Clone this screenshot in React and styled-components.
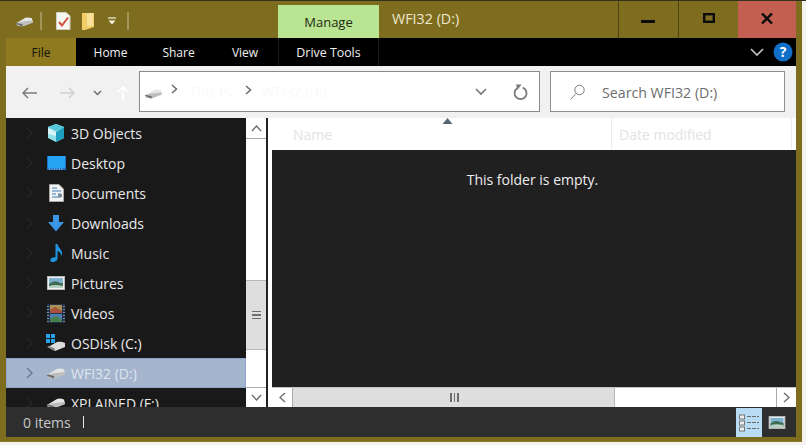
import React from "react";
import styled, { createGlobalStyle } from "styled-components";

const Global = createGlobalStyle`
  html, body { margin: 0; padding: 0; background: #e9e9e4; overflow: hidden; }
  * { box-sizing: border-box; }
`;

const FONT = `"Open Sans", "Noto Sans", "Liberation Sans", sans-serif`;

const Page = styled.div`
  width: 806px; height: 445px; display: flex; flex-direction: column;
  font-family: ${FONT}; background: #f4f4ef; border-top: 1px solid #33311f;
`;
const Win = styled.div`
  width: 802px; height: 441px; background: #7f6d1f; display: flex; flex-direction: column;
  border-bottom: 1px solid #8d7a24; padding-bottom: 4px;
`;
const TitleBar = styled.div`
  height: 37px; display: flex; align-items: stretch; flex: none; padding-left: 6px; padding-right: 6px;
`;
const Qat = styled.div`
  width: 272px; display: flex; align-items: center; padding-top: 3px; flex: none;
`;
const QatSep = styled.span`
  width: 2px; height: 18px; background: #a39559; flex: none;
  margin-left: ${p => p.$ml}px;
`;
const QatIcon = styled.svg`
  flex: none; margin-left: ${p => p.$ml || 0}px;
`;
const QatDrive = styled.span`
  display: flex; flex: none; margin-left: ${p => p.$ml}px;
`;
const ManageTab = styled.div`
  width: 101px; margin-top: 4px; background: #b9e492; color: #1d2b12; font-size: 13px;
  display: flex; align-items: center; justify-content: center; flex: none;
`;
const Title = styled.div`
  margin-left: 13px; color: #ece7cf; font-size: 14.3px; display: flex; align-items: center; padding-bottom: 2px;
  flex: 1;
`;
const WinBtn = styled.div`
  width: ${p => p.$w}px; display: flex; align-items: center; justify-content: center; flex: none;
  background: ${p => p.$close ? "#c25f50" : "transparent"};
  border-left: ${p => p.$close ? "none" : "1px solid #4e4313"};
  padding-bottom: 3px;
`;
const MinIcon = styled.svg`
  margin-top: 7px; margin-right: 1px;
`;
const Ribbon = styled.div`
  height: 28px; margin: 0 6px; background: #000; display: flex; align-items: stretch; flex: none;
`;
const Tab = styled.div`
  width: ${p => p.$w}px; flex: none; display: flex; align-items: center; justify-content: center;
  font-size: ${p => p.$ctx ? "12.4px" : "12px"}; color: ${p => p.$file ? "#15130a" : "#f0f0f0"};
  background: ${p => p.$file ? "#8f7a20" : "transparent"};
  border-left: ${p => p.$ctx ? "1px solid #1c1c1c" : "none"};
  border-right: ${p => p.$ctx ? "1px solid #1c1c1c" : "none"};
`;
const RibbonEnd = styled.div`
  margin-left: auto; display: flex; align-items: center; gap: 9px; padding-right: 3px;
`;
const Body = styled.div`
  flex: 1; min-height: 0; margin: 0 6px; display: flex; flex-direction: column;
`;
const Nav = styled.div`
  height: 52px; background: #f1f1f1; flex: none; display: flex; align-items: flex-start; padding-top: 5px;
`;
const NavButtons = styled.div`
  width: 133px; height: 41px; display: flex; align-items: center; flex: none; padding-top: 2px;
`;
const NavIcon = styled.svg`
  flex: none; margin-left: ${p => p.$ml}px; margin-top: ${p => p.$mt || 0}px;
`;
const AddressBox = styled.div`
  width: 401px; height: 41px; background: #fff; border: 1px solid #8a8a8a; display: flex; align-items: center; flex: none;
`;
const AddrDrive = styled.span`
  margin-left: 4px; margin-top: 3px; display: flex; flex: none;
`;
const Crumb = styled.span`
  color: #f9f9f9; font-size: 14px; margin-left: ${p => p.$ml}px; flex: none;
`;
const AddrEnd = styled.div`
  margin-left: auto; display: flex; align-items: center; gap: 26px; padding-right: 10px; padding-top: 1px;
`;
const SearchBox = styled.div`
  width: 235px; height: 41px; margin-left: 10px; background: #fff; border: 1px solid #8f8f8f;
  display: flex; align-items: center; flex: none; padding-left: 19px; padding-top: 1px;
`;
const SearchText = styled.span`
  color: #6d6d6d; font-size: 14.2px; margin-left: 17px;
`;
const Main = styled.div`
  flex: 1; min-height: 0; display: flex;
`;
const Tree = styled.div`
  width: 240px; background: #191919; overflow: hidden; flex: none;
`;
const Row = styled.div`
  height: 30px; display: flex; align-items: center;
  color: ${p => p.$sel ? "#dfe5ee" : "#e9e9e9"}; font-size: 14px;
  background: ${p => p.$sel ? "#a5b5cd" : "transparent"};
  box-shadow: ${p => p.$sel ? "inset 0 0 0 1px #8ba3c7" : "none"};
`;
const Chev = styled.svg`
  margin-left: 19px; flex: none; width: 10px; height: 12px;
`;
const RowIcon = styled.div`
  width: 24px; height: 20px; margin-left: 9px; margin-right: 3px; display: flex; align-items: center; justify-content: center; flex: none;
`;
const VScroll = styled.div`
  width: 22px; flex: none; display: flex; flex-direction: column; background: #fff; border-right: 2px solid #222;
`;
const SBtn = styled.div`
  flex: none; background: #fff; display: flex; align-items: center; justify-content: center;
  width: ${p => p.$w || "auto"}; height: ${p => p.$h || "auto"};
  border-bottom: ${p => p.$bb ? "1px solid #aaa" : "none"};
  border-top: ${p => p.$bt ? "1px solid #aaa" : "none"};
  border-left: ${p => p.$bl ? "1px solid #aaa" : "none"};
  border-right: ${p => p.$br ? "1px solid #aaa" : "none"};
`;
const VTrack = styled.div`
  flex: 1; display: flex; flex-direction: column; padding-top: 141px; padding-bottom: 37px;
`;
const VThumb = styled.div`
  flex: 1; background: #dedede; border-top: 1px solid #b8b8b8; border-bottom: 1px solid #b8b8b8;
  display: flex; align-items: center; justify-content: center;
`;
const Grip = styled.div`
  display: flex; flex-direction: ${p => p.$h ? "row" : "column"}; gap: 2px;
  margin-left: ${p => p.$h ? "2px" : "0"};
  span { display: block; background: #6d6d6d; width: ${p => p.$h ? "1.5px" : "9px"}; height: ${p => p.$h ? "9px" : "1.5px"}; }
`;
const Pane = styled.div`
  flex: 1; min-width: 0; display: flex; flex-direction: column; padding-left: 4px; background: #fff;
`;
const Header = styled.div`
  height: 32px; flex: none; background: #fff; position: relative; display: flex; align-items: stretch;
  font-size: 14px; color: #e3e3e3;
`;
const Col = styled.div`
  width: ${p => p.$w}px; flex: none; padding-left: ${p => p.$pl}px; padding-top: 7px;
  border-right: 1px solid #ececec; height: 31px;
`;
const SortMark = styled.svg`
  position: absolute; left: 170px; top: 0;
`;
const Empty = styled.div`
  flex: 1; background: #202020; color: #eeeeee; font-size: 14px; text-align: center; padding-top: 20px; padding-right: 3px;
`;
const HScroll = styled.div`
  height: 20px; flex: none; display: flex; background: #fff; border-top: 1px solid #c4c4c4;
`;
const HThumb = styled.div`
  width: 322px; background: #dedede; border-right: 1px solid #b8b8b8; display: flex; align-items: center; justify-content: center; flex: none;
`;
const HSpacer = styled.div`flex: 1;`;
const Status = styled.div`
  height: 30px; flex: none; background: #2e2e2e; display: flex; align-items: center; color: #c9c9c9; font-size: 14px; padding-left: 17px;
`;
const Divider = styled.span`
  width: 1px; height: 12px; background: #e8e8e8; margin-left: 12px;
`;
const ViewGroup = styled.div`
  margin-left: auto; display: flex; align-items: stretch; height: 29px; margin-top: 1px;
`;
const ViewBtn = styled.div`
  width: 26px; display: flex; align-items: center; justify-content: center; flex: none;
  background: ${p => p.$on ? "#b8dcf4" : "transparent"};
`;
const ViewRest = styled.div`
  width: 34px; display: flex; align-items: center; padding-left: 6px; flex: none;
`;

const Drive = ({ w = 20, h = 14 }) => (
  <svg width={w} height={h} viewBox="0 0 20 14">
    <path d="M1 9 L11 3 Q14 2 18 3.5 L19 8 L8 12 Z" fill="#e6e6e6" />
    <path d="M1 9 L8 7 L19 6 L19 8 L8 12.5 L2 11.5 Z" fill="#bdbdbd" />
    <path d="M0.5 9.5 L8 12.5 L8 10 L2 8.5 Z" fill="#6b6b6b" />
  </svg>
);
const PictureIcon = ({ w = 18, h = 14 }) => (
  <svg width={w} height={h} viewBox="0 0 18 14">
    <rect x="0.5" y="0.5" width="17" height="13" fill="#f2f2f2" stroke="#b9b9b9" />
    <rect x="2" y="2" width="14" height="10" fill="#7fb2cf" />
    <path d="M2 8 Q7 4 11 6 T16 7 V12 H2 Z" fill="#3e6b52" />
    <path d="M2 10 Q8 8 16 10 V12 H2 Z" fill="#b8d0c2" />
  </svg>
);
const ChevR = ({ c = "#242424" }) => (
  <Chev viewBox="0 0 10 12"><path d="M2 1 L7 6 L2 11" fill="none" stroke={c} strokeWidth="1.6" /></Chev>
);

const icons = {
  obj: (
    <svg width="20" height="20" viewBox="0 0 20 20">
      <path d="M10 1 L18 4 V15 L10 19 L2 15 V4 Z" fill="#8fe0ea" />
      <path d="M10 9 L18 4 V15 L10 19 Z" fill="#1e9fbe" />
      <path d="M10 1 L18 4 L10 8 L2 4 Z" fill="#57c7d8" />
      <path d="M2 5 L10 9 V13 L2 11 Z" fill="#d8f5f6" />
    </svg>
  ),
  desk: (
    <svg width="19" height="16" viewBox="0 0 19 16">
      <rect x="0" y="1" width="19" height="14" fill="#1d6fc2" />
      <rect x="1" y="1" width="17" height="12" fill="#25a4f5" />
      <path d="M2 14 H17" stroke="#cfe8fb" strokeWidth="1" strokeDasharray="1 1.5" />
    </svg>
  ),
  doc: (
    <svg width="15" height="18" viewBox="0 0 15 18">
      <path d="M0.5 0.5 H10 L14.5 5 V17.5 H0.5 Z" fill="#f3f3f3" stroke="#a8a8a8" />
      <path d="M3 4 H8 M3 7 H12 M3 10 H7 M9 10 H12 M3 13 H12" stroke="#3b7fbf" strokeWidth="1.2" />
      <path d="M9 10 H13 V13 H9 Z" fill="#7a8a99" />
    </svg>
  ),
  dl: (
    <svg width="16" height="17" viewBox="0 0 16 17">
      <path d="M5 0 H11 V7 H16 L8 16.5 L0 7 H5 Z" fill="#3a95e4" />
    </svg>
  ),
  music: (
    <svg width="13" height="18" viewBox="0 0 13 18">
      <path d="M5.5 0 H7.5 C8 4 12 5 12 9 C12 10.5 11.5 11.5 11 12 C11 9 9.5 7.5 7.5 7 V14.5 C7.5 16.5 5 18 2.5 18 C0.5 18 0 16.5 0.5 15.5 C1 14 3.5 13 5.5 13.5 Z" fill="#1f97e0" />
    </svg>
  ),
  pic: <PictureIcon />,
  vid: (
    <svg width="18" height="19" viewBox="0 0 18 19">
      <rect width="18" height="19" fill="#24324e" />
      <rect x="3" y="1" width="12" height="8" fill="#a88f52" />
      <rect x="3" y="10" width="12" height="8" fill="#4f7fae" />
      <path d="M3 6 L8 3 L15 7 V9 H3 Z" fill="#a9503f" />
      <path d="M3 15 L9 12 L15 16 V18 H3 Z" fill="#47804a" />
      <path d="M1 2 V18 M17 2 V18" stroke="#d8d8d8" strokeWidth="1" strokeDasharray="1 2" />
    </svg>
  ),
  os: (
    <svg width="20" height="18" viewBox="0 0 20 18">
      <rect x="0" y="0" width="4" height="4" fill="#27a3e8" />
      <rect x="5" y="0" width="4" height="4" fill="#27a3e8" />
      <rect x="0" y="5" width="4" height="4" fill="#27a3e8" />
      <rect x="5" y="5" width="4" height="4" fill="#27a3e8" />
      <path d="M2 13 L11 8 Q15 7 19 9 L19 13 L9 17 Z" fill="#dcdcdc" />
      <path d="M1 13 L9 17 L9 14.5 L3 12 Z" fill="#8a8a8a" />
    </svg>
  ),
  drive: <Drive />,
};

const rows = [
  ["3D Objects", "obj"], ["Desktop", "desk"], ["Documents", "doc"], ["Downloads", "dl"],
  ["Music", "music"], ["Pictures", "pic"], ["Videos", "vid"], ["OSDisk (C:)", "os"],
  ["WFI32 (D:)", "drive", true], ["XPLAINED (F:)", "drive"],
];

const Caret = ({ d, c = "#6e6e6e", w = 12, h = 8, sw = 1.4 }) => (
  <svg width={w} height={h} viewBox={`0 0 ${w} ${h}`}><path d={d} fill="none" stroke={c} strokeWidth={sw} /></svg>
);

export default function App() {
  return (
    <>
      <Global />
      <Page>
        <Win>
          <TitleBar>
            <Qat>
              <QatDrive $ml={9}><Drive w={19} h={13} /></QatDrive>
              <QatSep $ml={6} />
              <QatIcon $ml={14} width="15" height="18" viewBox="0 0 15 18">
                <path d="M0.5 0.5 H10 L14 4 V17.5 H0.5 Z" fill="#f6f6f2" stroke="#cfcfc4" />
                <path d="M3 10 L6 13.5 L12 5.5" fill="none" stroke="#d2503c" strokeWidth="2" />
              </QatIcon>
              <QatIcon $ml={11} width="13" height="18" viewBox="0 0 13 18">
                <path d="M0 1 H12 V15 L3 18 H0 Z" fill="#f3cd68" />
                <path d="M5 1 H11 V14 L5 14 Z" fill="#fae19a" />
              </QatIcon>
              <QatIcon $ml={12} width="10" height="9" viewBox="0 0 10 9">
                <path d="M1 1 H9" stroke="#f4f1e2" strokeWidth="1.2" />
                <path d="M1.5 3.5 H8.5 L5 7.5 Z" fill="#f4f1e2" />
              </QatIcon>
              <QatSep $ml={10} />
            </Qat>
            <ManageTab>Manage</ManageTab>
            <Title>WFI32 (D:)</Title>
            <WinBtn $w={60}>
              <MinIcon width="14" height="4" viewBox="0 0 14 4"><rect width="14" height="3" fill="#0c0c0c" /></MinIcon>
            </WinBtn>
            <WinBtn $w={60}>
              <svg width="12" height="10" viewBox="0 0 12 10"><rect x="1.2" y="1.2" width="9.6" height="7.6" fill="none" stroke="#0c0c0c" strokeWidth="2.4" /></svg>
            </WinBtn>
            <WinBtn $w={58} $close>
              <svg width="12" height="11" viewBox="0 0 12 11"><path d="M1 0.5 L11 10.5 M11 0.5 L1 10.5" stroke="#0c0c0c" strokeWidth="2.4" /></svg>
            </WinBtn>
          </TitleBar>
          <Ribbon>
            <Tab $w={70} $file>File</Tab>
            <Tab $w={69}>Home</Tab>
            <Tab $w={67}>Share</Tab>
            <Tab $w={66}>View</Tab>
            <Tab $w={101} $ctx>Drive Tools</Tab>
            <RibbonEnd>
              <Caret w={14} h={9} d="M1 1 L7 7 L13 1" c="#c4c4c4" sw={1.6} />
              <svg width="20" height="20" viewBox="0 0 20 20">
                <circle cx="10" cy="10" r="9.5" fill="#0f6fc9" />
                <text x="10" y="15" textAnchor="middle" fontSize="14" fontWeight="700" fill="#fff" fontFamily={FONT}>?</text>
              </svg>
            </RibbonEnd>
          </Ribbon>
          <Body>
            <Nav>
              <NavButtons>
                <NavIcon $ml={16} width="15" height="12" viewBox="0 0 15 12"><path d="M15 6 H1 M6 1 L1 6 L6 11" fill="none" stroke="#7b7b7b" strokeWidth="1.5" /></NavIcon>
                <NavIcon $ml={23} width="15" height="12" viewBox="0 0 15 12"><path d="M0 6 H14 M9 1 L14 6 L9 11" fill="none" stroke="#cfcfcf" strokeWidth="1.5" /></NavIcon>
                <NavIcon $ml={18} width="9" height="6" viewBox="0 0 9 6"><path d="M1 1 L4.5 4.5 L8 1" fill="none" stroke="#6d6d6d" strokeWidth="1.5" /></NavIcon>
                <NavIcon $ml={15} width="12" height="16" viewBox="0 0 12 16"><path d="M6 16 V2 M1 7 L6 2 L11 7" fill="none" stroke="#ffffff" strokeWidth="1.6" /></NavIcon>
              </NavButtons>
              <AddressBox>
                <AddrDrive><Drive w={19} h={13} /></AddrDrive>
                <NavIcon $ml={8} $mt={-5} width="7" height="10" viewBox="0 0 7 10"><path d="M1 1 L5.5 5 L1 9" fill="none" stroke="#6b6b6b" strokeWidth="1.5" /></NavIcon>
                <Crumb $ml={11}>This PC</Crumb>
                <NavIcon $ml={9} $mt={-3} width="7" height="10" viewBox="0 0 7 10"><path d="M1 1 L5.5 5 L1 9" fill="none" stroke="#6b6b6b" strokeWidth="1.5" /></NavIcon>
                <Crumb $ml={9}>WFI32 (D:)</Crumb>
                <AddrEnd>
                  <Caret w={12} h={8} d="M1 1 L6 6 L11 1" c="#777" sw={1.6} />
                  <svg width="16" height="17" viewBox="0 0 16 17">
                    <path d="M9.8 3.6 A6 6 0 1 1 4.2 4.2" fill="none" stroke="#7b7b7b" strokeWidth="1.8" />
                    <path d="M3 0.5 L8.5 0.5 L4.5 6 Z" fill="#7b7b7b" />
                  </svg>
                </AddrEnd>
              </AddressBox>
              <SearchBox>
                <svg width="15" height="16" viewBox="0 0 15 16"><circle cx="9.5" cy="6" r="4.7" fill="none" stroke="#7d7d7d" /><path d="M6 9.5 L0.5 15.5" stroke="#7d7d7d" /></svg>
                <SearchText>Search WFI32 (D:)</SearchText>
              </SearchBox>
            </Nav>
            <Main>
              <Tree>
                {rows.map(([t, k, sel]) => (
                  <Row key={t} $sel={sel}>
                    <ChevR c={sel ? "#6f7f97" : "#242424"} />
                    <RowIcon>{icons[k]}</RowIcon>
                    <span>{t}</span>
                  </Row>
                ))}
              </Tree>
              <VScroll>
                <SBtn $h="21px" $bb><Caret w={11} h={7} d="M1 6 L5.5 1 L10 6" /></SBtn>
                <VTrack>
                  <VThumb><Grip><span /><span /><span /></Grip></VThumb>
                </VTrack>
                <SBtn $h="20px" $bt><Caret w={11} h={7} d="M1 1 L5.5 6 L10 1" /></SBtn>
              </VScroll>
              <Pane>
                <Header>
                  <SortMark width="11" height="6" viewBox="0 0 11 6"><path d="M5.5 0 L10.5 6 H0.5 Z" fill="#5b6675" /></SortMark>
                  <Col $w={340} $pl={21}>Name</Col>
                  <Col $w={180} $pl={7}>Date modified</Col>
                </Header>
                <Empty>This folder is empty.</Empty>
                <HScroll>
                  <SBtn $w="21px" $br><Caret w={7} h={11} d="M6 1 L1 5.5 L6 10" /></SBtn>
                  <HThumb><Grip $h><span /><span /><span /></Grip></HThumb>
                  <HSpacer />
                  <SBtn $w="20px" $bl><Caret w={7} h={11} d="M1 1 L6 5.5 L1 10" /></SBtn>
                </HScroll>
              </Pane>
            </Main>
            <Status>
              <span>0 items</span>
              <Divider />
              <ViewGroup>
                <ViewBtn $on>
                  <svg width="20" height="18" viewBox="0 0 20 18">
                    <rect x="0.5" y="1" width="5" height="4" fill="#eee" stroke="#777" />
                    <rect x="0.5" y="7" width="5" height="4" fill="#eee" stroke="#777" />
                    <rect x="0.5" y="13" width="5" height="4" fill="#eee" stroke="#777" />
                    <path d="M8 2.5 H20 M8 8.5 H20 M8 14.5 H20" stroke="#6a6a6a" strokeWidth="1" strokeDasharray="4 1" />
                  </svg>
                </ViewBtn>
                <ViewRest><PictureIcon w={18} h={13} /></ViewRest>
              </ViewGroup>
            </Status>
          </Body>
        </Win>
      </Page>
    </>
  );
}
